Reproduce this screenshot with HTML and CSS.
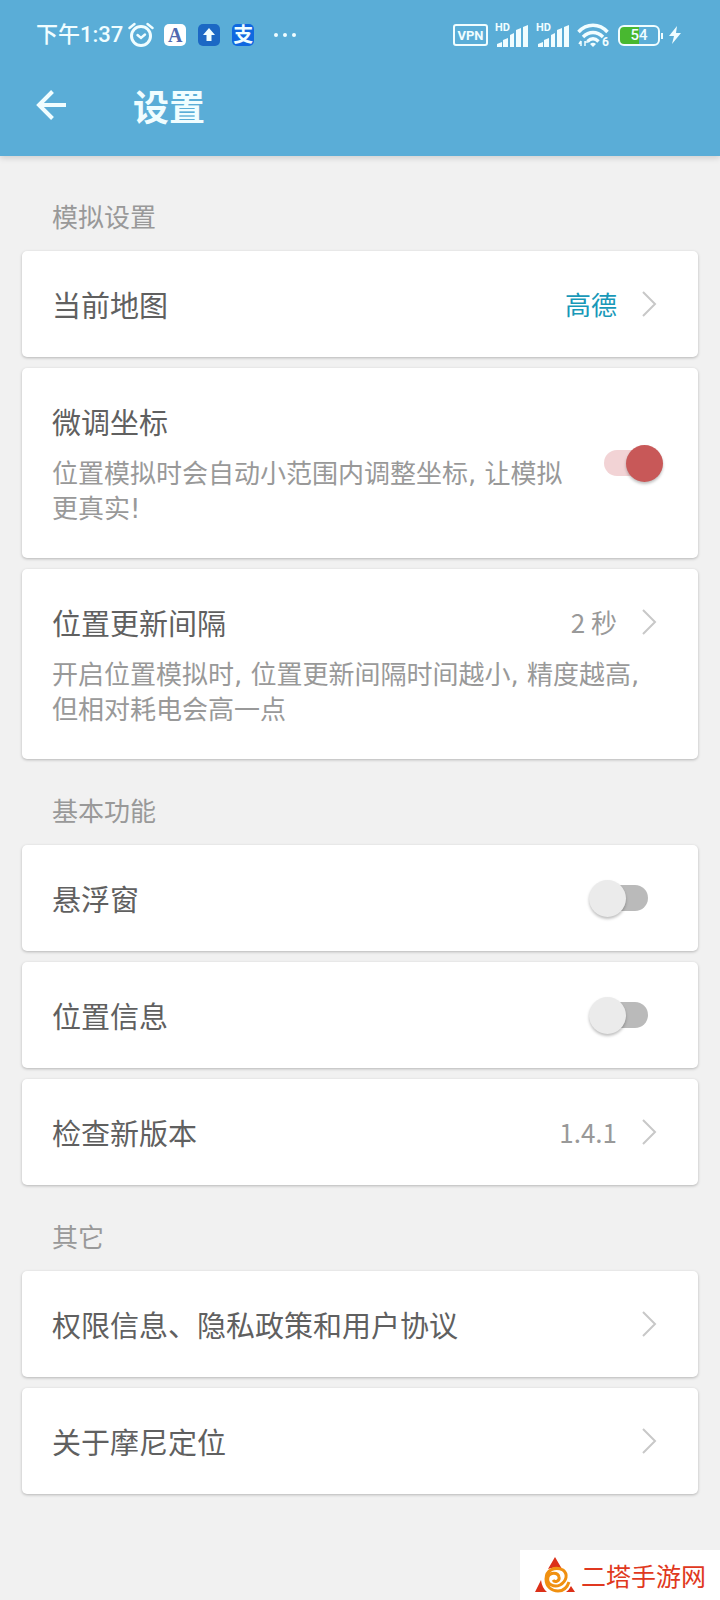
FILE: index.html
```html
<!DOCTYPE html>
<html lang="zh-CN">
<head>
    <meta charset="UTF-8">
    <meta name="viewport" content="width=device-width, initial-scale=1.0">
    <title>设置</title>
    <link rel="stylesheet" href="styles.css">
</head>
<body>
    <header class="header">
        <div class="status-bar">
            <div class="status-left">
                <span class="time">下午1:37</span>
                <svg class="alarm" width="26" height="26" viewBox="0 0 26 26" fill="none" stroke="currentColor" stroke-width="3" stroke-linecap="round">
                    <circle cx="13" cy="14" r="9.5"/>
                    <path d="M9.5 13l3.5 3 4-3.5" stroke-width="2.4"/>
                    <path d="M1.5 6l5-4M24.5 6l-5-4" stroke-width="2.4"/>
                </svg>
                <span class="app-icon app-a">A</span>
                <span class="app-icon app-up">
                    <svg width="14" height="16" viewBox="0 0 14 16" fill="currentColor"><path d="M7 1l6 7H9.5v6h-5V8H1z"/></svg>
                </span>
                <span class="app-icon app-pay">支</span>
                <svg class="more" width="24" height="6" viewBox="0 0 24 6" fill="currentColor">
                    <circle cx="3" cy="3" r="2"/><circle cx="12" cy="3" r="2"/><circle cx="21" cy="3" r="2"/>
                </svg>
            </div>
            <div class="status-right">
                <span class="vpn">VPN</span>
                <span class="signal">
                    <span class="hd">HD</span>
                    <svg width="34" height="23" viewBox="0 0 34 23" fill="currentColor">
                        <path d="M2 23v-3l5-2v5zM8 23v-7l5-2v9zM15 23V11l4-2v14zM21 23V6l5-2v19zM28 23V3l5-2v22z"/>
                    </svg>
                </span>
                <span class="signal">
                    <span class="hd">HD</span>
                    <svg width="34" height="23" viewBox="0 0 34 23" fill="currentColor">
                        <path d="M2 23v-3l5-2v5zM8 23v-7l5-2v9zM15 23V11l4-2v14zM21 23V6l5-2v19zM28 23V3l5-2v22z"/>
                    </svg>
                </span>
                <span class="wifi">
                    <svg width="32" height="24" viewBox="0 0 32 24" fill="none" stroke="currentColor" stroke-width="3.4">
                        <path d="M1.500 9c8-9 21-9 29 0M6 14c6-6 14-6 20 0M10.500 18.500c3.500-3.500 7.500-3.500 11 0"/>
                        <path d="M13 21q3-2.500 6 0l-3 3z" fill="currentColor" stroke="none"/>
                        <path d="M4 18v5M2 21l2-3M8 23v-5M8 19h3" stroke-width="1.5"/>
                    </svg>
                    <span class="wifi-gen">6</span>
                </span>
                <span class="battery"><span class="battery-level">54</span></span>
                <svg class="bolt" width="12" height="18" viewBox="0 0 12 18" fill="currentColor"><path d="M8 0L0 10h5l-2 8 9-11H7z"/></svg>
            </div>
        </div>
        <div class="toolbar">
            <button class="back" type="button" aria-label="返回">
                <svg width="30" height="30" viewBox="0 0 30 30" fill="none" stroke="currentColor" stroke-width="4">
                    <path d="M30 15H3M16.500 1.500L3 15l13.500 13.500"/>
                </svg>
            </button>
            <h1>设置</h1>
        </div>
    </header>

    <main class="settings">
        <section>
            <h2>模拟设置</h2>
            <a class="card" href="#map">
                <span class="row">
                    <span class="title">当前地图</span>
                    <span class="value accent">高德</span>
                    <svg class="chevron" width="15" height="26" viewBox="0 0 15 26"><path d="M1 1l12 12L1 25"/></svg>
                </span>
            </a>
            <div class="card card-switch card-on">
                <div class="card-text">
                    <label class="title" for="adjust">微调坐标</label>
                    <p class="desc">位置模拟时会自动小范围内调整坐标, 让模拟更真实!</p>
                </div>
                <input class="switch" type="checkbox" id="adjust" checked>
            </div>
            <a class="card" href="#interval">
                <span class="row">
                    <span class="title">位置更新间隔</span>
                    <span class="value">2 秒</span>
                    <svg class="chevron" width="15" height="26" viewBox="0 0 15 26"><path d="M1 1l12 12L1 25"/></svg>
                </span>
                <span class="desc">开启位置模拟时, 位置更新间隔时间越小, 精度越高, 但相对耗电会高一点</span>
            </a>
        </section>

        <section>
            <h2>基本功能</h2>
            <div class="card card-switch">
                <label class="title" for="float">悬浮窗</label>
                <input class="switch" type="checkbox" id="float">
            </div>
            <div class="card card-switch">
                <label class="title" for="location">位置信息</label>
                <input class="switch" type="checkbox" id="location">
            </div>
            <a class="card" href="#version">
                <span class="row">
                    <span class="title">检查新版本</span>
                    <span class="value">1.4.1</span>
                    <svg class="chevron" width="15" height="26" viewBox="0 0 15 26"><path d="M1 1l12 12L1 25"/></svg>
                </span>
            </a>
        </section>

        <section>
            <h2>其它</h2>
            <a class="card" href="#policy">
                <span class="row">
                    <span class="title">权限信息、隐私政策和用户协议</span>
                    <svg class="chevron" width="15" height="26" viewBox="0 0 15 26"><path d="M1 1l12 12L1 25"/></svg>
                </span>
            </a>
            <a class="card" href="#about">
                <span class="row">
                    <span class="title">关于摩尼定位</span>
                    <svg class="chevron" width="15" height="26" viewBox="0 0 15 26"><path d="M1 1l12 12L1 25"/></svg>
                </span>
            </a>
        </section>
    </main>

    <div class="watermark">
        <svg width="42" height="38" viewBox="0 0 42 38">
            <path d="M21 1l7 12q-7-3-14 0zM7 24q1 8 6 12H1zM41 36h-9q3-2 5-6z" fill="#dc3018"/>
            <path d="M19 24c2 3 7 1 6-3-1-5-9-5-11 0-2 7 6 11 12 8 7-4 8-11 3-15-8-4-17 0-17 9 0 8 6 12 12 12 5 0 9-3 11-9" fill="none" stroke="#f09010" stroke-width="3"/>
        </svg>
        <span>二塔手游网</span>
    </div>
</body>
</html>
```
FILE: styles.css
```css
* {
    box-sizing: border-box;
}
body {
    margin: 0;
    min-height: 100vh;
    background-color: #f1f1f1;
    font-family: Roboto, "Noto Sans CJK SC", sans-serif;
    color: #606060;
}
h1, h2, p {
    margin: 0;
}
h1, .title, .value, .watermark {
    font-family: "Noto Sans CJK SC", sans-serif;
}

/* header */
.header {
    background-color: #5aadd7;
    color: #f0fdff;
    box-shadow: 0 2px 6px rgba(0,0,0,0.15);
}
.status-bar {
    display: flex;
    justify-content: space-between;
    align-items: center;
    height: 70px;
    padding: 0 39px 0 36px;
}
.status-left, .status-right {
    display: flex;
    align-items: center;
}
.time {
    font-size: 22px;
    line-height: 28px;
    font-weight: 500;
}
.alarm {
    margin: 0 10px 0 5px;
}
.app-icon {
    display: flex;
    align-items: center;
    justify-content: center;
    width: 22px;
    height: 22px;
    margin-right: 12px;
    border-radius: 5px;
    font-weight: bold;
}
.app-a {
    background: white;
    color: #5068b0;
    font-family: "Liberation Serif", serif;
    font-size: 20px;
    line-height: 22px;
}
.app-up {
    background: #1c68c4;
}
.app-pay {
    margin-right: 19px;
    background: #1068e0;
    font-size: 20px;
    line-height: 22px;
}
.vpn {
    width: 35px;
    height: 22px;
    border: 2px solid currentColor;
    border-radius: 3px;
    font-size: 13px;
    line-height: 19px;
    font-weight: bold;
    text-align: center;
}
.signal {
    position: relative;
    display: flex;
    margin-left: 7px;
}
.hd {
    position: absolute;
    top: -1px;
    left: 0;
    font-size: 11px;
    line-height: 10px;
    font-weight: bold;
}
.wifi {
    position: relative;
    display: flex;
    margin-left: 7px;
}
.wifi-gen {
    position: absolute;
    right: 0;
    bottom: -1px;
    font-size: 12px;
    line-height: 11px;
    font-weight: bold;
}
.battery {
    position: relative;
    width: 42px;
    height: 21px;
    margin-left: 9px;
    border: 2px solid currentColor;
    border-radius: 6px;
    background: linear-gradient(to right, #48b830 50%, transparent 50%);
    text-align: center;
}
.battery::after {
    content: "";
    position: absolute;
    top: 6px;
    right: -5px;
    width: 2px;
    height: 6px;
    background: currentColor;
}
.battery-level {
    display: block;
    font-size: 15px;
    line-height: 17px;
    font-weight: 500;
}
.bolt {
    margin-left: 9px;
}
.toolbar {
    display: flex;
    align-items: center;
    height: 86px;
    padding: 0 36px 16px;
}
.back {
    display: flex;
    padding: 0;
    border: none;
    background: none;
    color: inherit;
    cursor: pointer;
}
h1 {
    margin-left: 67px;
    font-size: 36px;
    line-height: 48px;
    font-weight: bold;
}

/* settings list */
.settings {
    padding: 9px 22px 107px;
}
h2 {
    padding: 34px 30px 14px;
    font-size: 26px;
    line-height: 38px;
    font-weight: normal;
    color: #999;
}
.card {
    display: block;
    padding: 33px 30px;
    border-radius: 5px;
    background: white;
    box-shadow: 0 1px 3px rgba(0,0,0,0.25);
    color: inherit;
    text-decoration: none;
}
.card + .card {
    margin-top: 11px;
}
.row {
    display: flex;
    align-items: center;
    padding-right: 11px;
}
.title {
    flex: 1;
    font-size: 29px;
    line-height: 40px;
}
.card-text .title {
    display: block;
}
.value {
    font-size: 26px;
    line-height: 40px;
    color: #999;
}
.accent {
    color: #1898b8;
}
.chevron {
    margin-left: 25px;
    fill: none;
    stroke: #c8c8c8;
    stroke-width: 2;
}
.desc {
    display: block;
    margin: 16px 0 -2px;
    font-family: "DejaVu Sans", "Noto Sans CJK SC", sans-serif;
    font-size: 26px;
    line-height: 35px;
    color: #999;
}

/* switch */
.card-switch {
    display: flex;
    align-items: center;
    gap: 24px;
    padding-right: 50px;
}
.card-on {
    padding-right: 35px;
}
.card-text {
    flex: 1;
}
.switch {
    position: relative;
    flex: none;
    display: flex;
    align-items: center;
    appearance: none;
    width: 59px;
    height: 37px;
    margin: 0;
    cursor: pointer;
}
.switch::before {
    content: "";
    width: 44px;
    height: 26px;
    margin-left: auto;
    border-radius: 13px;
    background: #bababa;
}
.switch::after {
    content: "";
    position: absolute;
    top: 0;
    left: 0;
    width: 37px;
    height: 37px;
    border-radius: 50%;
    background: #ebebeb;
    box-shadow: 0 2px 3px rgba(0,0,0,0.25);
}
.switch:checked::before {
    margin: 0;
    background: #f2d3d5;
}
.switch:checked::after {
    left: auto;
    right: 0;
    background: #c85858;
}

/* site mark in the corner */
.watermark {
    position: fixed;
    right: 0;
    bottom: 0;
    display: flex;
    align-items: center;
    gap: 5px;
    height: 50px;
    padding: 0 14px;
    background: white;
    color: #e03820;
    font-size: 25px;
    line-height: 36px;
}
```
